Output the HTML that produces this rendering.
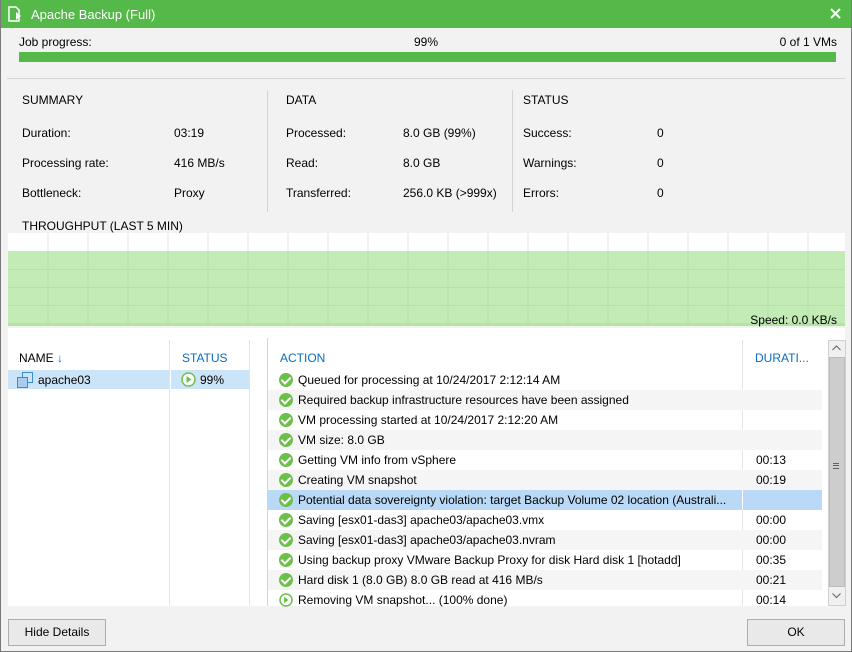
<!DOCTYPE html>
<html><head><style>
*{margin:0;padding:0;box-sizing:border-box}
body{width:852px;height:652px;background:#f0f0f0;font-family:"Liberation Sans",sans-serif;font-size:12px;color:#000;position:relative;overflow:hidden}
.win{position:absolute;left:0;top:0;width:852px;height:652px;background:#f2f2f2}
.frame{position:absolute;left:0;top:0;width:852px;height:652px;border:1px solid #7a7a7a;border-top:none}
.title{position:absolute;left:0;top:0;width:852px;height:28px;background:#54b948;color:#fff;font-size:13px}
.a{position:absolute;white-space:nowrap}
.hd{color:#0a6cc0}
.row{position:absolute;left:268px;width:554px;height:20px}
.ic{position:absolute;left:11px;top:3px;width:14px;height:14px;border-radius:50%;background:#6cc04a}
.ic:after{content:"";position:absolute;left:4px;top:2px;width:4px;height:7px;border:solid #fff;border-width:0 2px 2px 0;transform:rotate(45deg)}
.tx{position:absolute;left:30px;top:3px;white-space:nowrap;width:440px;overflow:hidden}
.du{position:absolute;left:488px;top:3px}
.btn{position:absolute;top:619px;height:27px;border:1px solid #adadad;background:#e9e9e9;text-align:center;line-height:25px}
</style></head><body>
<div class="win">
<div class="title">
<svg style="position:absolute;left:7px;top:6px" width="16" height="16" viewBox="0 0 16 16"><path d="M2 1h7l3 3v11H2z" fill="none" stroke="#fff" stroke-width="1.5"/><path d="M9 6l5 4-5 4z" fill="#fff"/></svg>
<div class="a" style="left:31px;top:7px">Apache Backup (Full)</div>
<svg style="position:absolute;left:830px;top:8px" width="11" height="11" viewBox="0 0 11 11"><path d="M1 1L10 10M10 1L1 10" stroke="#fff" stroke-width="2"/></svg>
</div>
<div class="a" style="left:19px;top:35px">Job progress:</div>
<div class="a" style="left:414px;top:35px">99%</div>
<div class="a" style="right:15px;top:35px">0 of 1 VMs</div>
<div class="a" style="left:19px;top:52px;width:817px;height:10px;background:#54b948"></div>
<div class="a" style="left:7px;top:78px;width:838px;height:1px;background:#d4d4d4"></div>

<div class="a" style="left:22px;top:93px">SUMMARY</div>
<div class="a" style="left:22px;top:126px">Duration:</div><div class="a" style="left:174px;top:126px">03:19</div>
<div class="a" style="left:22px;top:156px">Processing rate:</div><div class="a" style="left:174px;top:156px">416 MB/s</div>
<div class="a" style="left:22px;top:186px">Bottleneck:</div><div class="a" style="left:174px;top:186px">Proxy</div>
<div class="a" style="left:267px;top:90px;width:1px;height:122px;background:#d4d4d4"></div>
<div class="a" style="left:286px;top:93px">DATA</div>
<div class="a" style="left:286px;top:126px">Processed:</div><div class="a" style="left:403px;top:126px">8.0 GB (99%)</div>
<div class="a" style="left:286px;top:156px">Read:</div><div class="a" style="left:403px;top:156px">8.0 GB</div>
<div class="a" style="left:286px;top:186px">Transferred:</div><div class="a" style="left:403px;top:186px">256.0 KB (&gt;999x)</div>
<div class="a" style="left:512px;top:90px;width:1px;height:122px;background:#d4d4d4"></div>
<div class="a" style="left:523px;top:93px">STATUS</div>
<div class="a" style="left:523px;top:126px">Success:</div><div class="a" style="left:657px;top:126px">0</div>
<div class="a" style="left:523px;top:156px">Warnings:</div><div class="a" style="left:657px;top:156px">0</div>
<div class="a" style="left:523px;top:186px">Errors:</div><div class="a" style="left:657px;top:186px">0</div>

<div class="a" style="left:22px;top:219px">THROUGHPUT (LAST 5 MIN)</div>
<svg style="position:absolute;left:8px;top:233px" width="837" height="93">
<rect width="837" height="93" fill="#fff"/>
<rect y="18" width="837" height="75" fill="#c2ebb6"/>
<rect y="90" width="837" height="3" fill="#b4e3a6"/>
<g stroke="#e2e2e2"><path d="M40 0V18M80 0V18M120 0V18M160 0V18M200 0V18M240 0V18M280 0V18M320 0V18M360 0V18M400 0V18M440 0V18M480 0V18M520 0V18M560 0V18M600 0V18M640 0V18M680 0V18M720 0V18M760 0V18M800 0V18"/></g>
<g stroke="#b6e0aa"><path d="M40 18V90M80 18V90M120 18V90M160 18V90M200 18V90M240 18V90M280 18V90M320 18V90M360 18V90M400 18V90M440 18V90M480 18V90M520 18V90M560 18V90M600 18V90M640 18V90M680 18V90M720 18V90M760 18V90M800 18V90M0 36.5H837M0 54.5H837M0 72.5H837"/></g>
</svg>
<div class="a" style="right:15px;top:313px">Speed: 0.0 KB/s</div>

<div class="a" style="left:8px;top:328px;width:837px;height:278px;background:#fff"></div>
<div class="a" style="left:169px;top:340px;width:1px;height:266px;background:#e3e3e3"></div>
<div class="a" style="left:249px;top:340px;width:1px;height:266px;background:#e3e3e3"></div>
<div class="a" style="left:250px;top:328px;width:17px;height:278px;background:#fff"></div>
<div class="a" style="left:267px;top:338px;width:1px;height:268px;background:#d4d4d4"></div>
<div class="a" style="left:742px;top:340px;width:1px;height:266px;background:#e3e3e3"></div>
<div class="a" style="left:19px;top:351px">NAME <span class="hd" style="font-weight:bold">&#8595;</span></div>
<div class="a hd" style="left:182px;top:351px">STATUS</div>
<div class="a hd" style="left:280px;top:351px">ACTION</div>
<div class="a hd" style="left:755px;top:351px">DURATI...</div>
<div class="a" style="left:8px;top:370px;width:161px;height:19px;background:#cce4f7"></div>
<div class="a" style="left:171px;top:370px;width:78px;height:19px;background:#cce4f7"></div>
<svg style="position:absolute;left:17px;top:372px" width="16" height="16"><rect x="5.5" y="0.5" width="10" height="10" fill="none" stroke="#3a8bd0"/><rect x="0.5" y="5.5" width="10" height="10" fill="#a8cdee" stroke="#3a8bd0"/></svg>
<div class="a" style="left:38px;top:373px">apache03</div>
<svg style="position:absolute;left:181px;top:372px" width="15" height="15"><circle cx="7.5" cy="7.5" r="6.5" fill="#fff" stroke="#6cc04a" stroke-width="1.5"/><path d="M5.5 4l5 3.5-5 3.5z" fill="#6cc04a"/></svg>
<div class="a" style="left:200px;top:373px">99%</div>

<div class="row" style="top:370px"><div class="ic"></div><div class="tx">Queued for processing at 10/24/2017 2:12:14 AM</div></div>
<div class="row" style="top:390px;background:#f5f5f5"><div class="ic"></div><div class="tx">Required backup infrastructure resources have been assigned</div></div>
<div class="row" style="top:410px"><div class="ic"></div><div class="tx">VM processing started at 10/24/2017 2:12:20 AM</div></div>
<div class="row" style="top:430px;background:#f5f5f5"><div class="ic"></div><div class="tx">VM size: 8.0 GB</div></div>
<div class="row" style="top:450px"><div class="ic"></div><div class="tx">Getting VM info from vSphere</div><div class="du">00:13</div></div>
<div class="row" style="top:470px;background:#f5f5f5"><div class="ic"></div><div class="tx">Creating VM snapshot</div><div class="du">00:19</div></div>
<div class="row" style="top:490px;background:#b9d9f7"><div class="ic"></div><div class="tx" style="width:444px">Potential data sovereignty violation: target Backup Volume 02 location (Australi...</div></div>
<div class="row" style="top:510px"><div class="ic"></div><div class="tx">Saving [esx01-das3] apache03/apache03.vmx</div><div class="du">00:00</div></div>
<div class="row" style="top:530px;background:#f5f5f5"><div class="ic"></div><div class="tx">Saving [esx01-das3] apache03/apache03.nvram</div><div class="du">00:00</div></div>
<div class="row" style="top:550px"><div class="ic"></div><div class="tx">Using backup proxy VMware Backup Proxy for disk Hard disk 1 [hotadd]</div><div class="du">00:35</div></div>
<div class="row" style="top:570px;background:#f5f5f5"><div class="ic"></div><div class="tx">Hard disk 1 (8.0 GB) 8.0 GB read at 416 MB/s</div><div class="du">00:21</div></div>
<div class="row" style="top:590px;height:16px"><svg style="position:absolute;left:11px;top:3px" width="14" height="14"><circle cx="7" cy="7" r="6" fill="#fff" stroke="#6cc04a" stroke-width="1.5"/><path d="M5 3.8l4.5 3.2-4.5 3.2z" fill="#6cc04a"/></svg><div class="tx">Removing VM snapshot... (100% done)</div><div class="du">00:14</div></div>
<div class="a" style="left:742px;top:490px;width:1px;height:20px;background:#fff"></div>

<div class="a" style="left:828px;top:340px;width:18px;height:266px;background:#f0f0f0;border:1px solid #d0d0d0"></div>
<div class="a" style="left:829px;top:357px;width:16px;height:230px;background:#cdcdcd;border:1px solid #bdbdbd"></div>
<div class="a" style="left:833px;top:463px;width:6px;height:6px;border-top:1px solid #606060;border-bottom:1px solid #606060"></div>
<div class="a" style="left:833px;top:465px;width:6px;height:1px;background:#606060"></div>
<svg style="position:absolute;left:832px;top:593px" width="9" height="6"><path d="M0.5 0.5L4.5 4.5L8.5 0.5" fill="none" stroke="#606060"/></svg>
<svg style="position:absolute;left:832px;top:345px" width="9" height="6"><path d="M0.5 5L4.5 1L8.5 5" fill="none" stroke="#606060"/></svg>

<div class="btn" style="left:8px;width:98px">Hide Details</div>
<div class="btn" style="left:747px;width:98px">OK</div>
</div>
<div class="frame"></div>
</body></html>
